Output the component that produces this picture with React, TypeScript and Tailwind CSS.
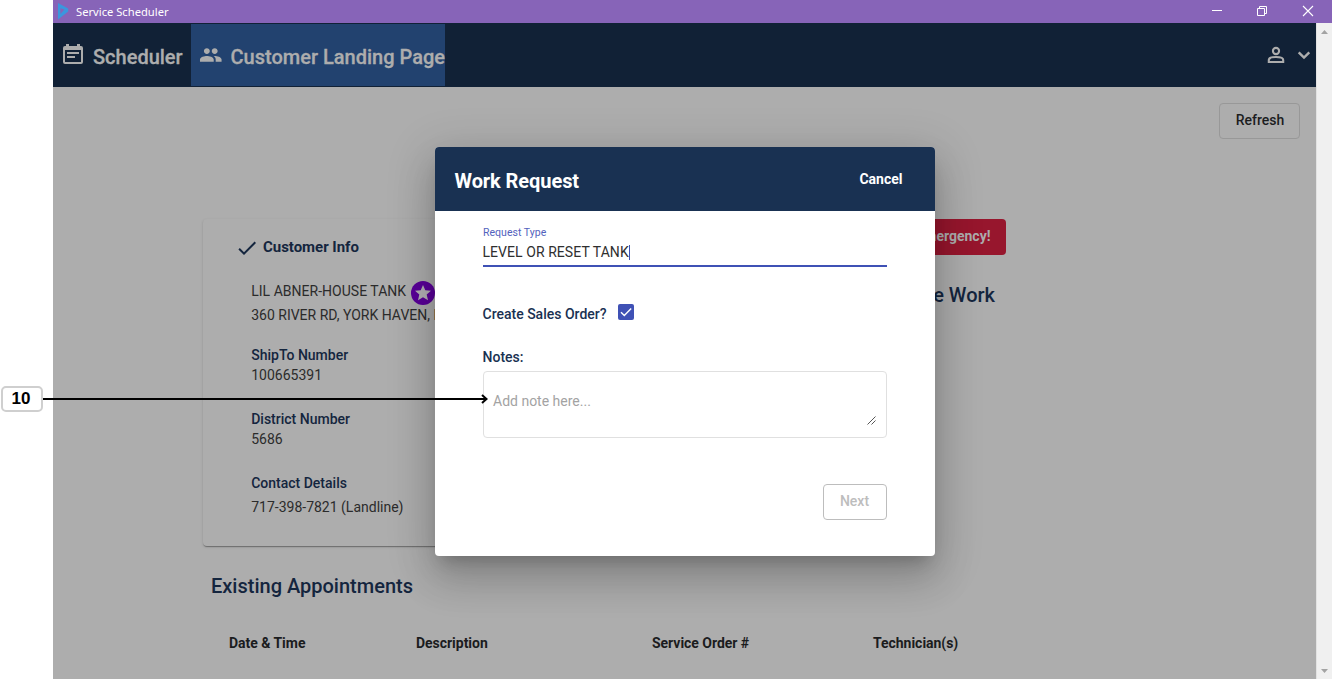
import React from "react";
import { MdCheck, MdPeople } from "react-icons/md";

function TitleBar() {
  return (
    <div className="flex h-[23px] shrink-0 items-center bg-[#8764b8] text-white">
      <svg className="ml-[4px] h-[17px] w-[12px]" viewBox="0 0 12 17">
        <path d="M1 0L11.2 5.6V8.6L1 16.4ZM3.4 5.2V11L7.4 6.6Z" fill="#3a97de" fillRule="evenodd" />
      </svg>
      <span className="ml-[7px] font-['Noto_Sans',sans-serif] text-[11.2px] leading-[22px]">Service Scheduler</span>
      <div className="ml-auto flex h-full items-center pr-[18px] pb-[2px]">
        <svg className="h-[12px] w-[103px]" viewBox="0 0 103 12" fill="none" stroke="#fff">
          <path d="M1 5.5H11M46.5 3.5H53.5V10.5H46.5ZM48.5 3.5V1.5H55.5V8.5H53.5" />
          <path d="M92 1L102 11M102 1L92 11" strokeWidth="1.1" />
        </svg>
      </div>
    </div>
  );
}

function NavBar() {
  return (
    <nav className="flex h-16 shrink-0 items-stretch bg-[#112136] py-px text-xl font-medium text-[#adadad]">
      <div className="flex w-[138px] items-center">
        <svg viewBox="0 0 20 20" className="mb-[3px] ml-[10px] size-5" fill="currentColor">
          <path d="M3 0h3v2h8V0h3v2h1a2 2 0 0 1 2 2v14a2 2 0 0 1-2 2H2a2 2 0 0 1-2-2V4a2 2 0 0 1 2-2h1ZM2 6v12h16V6Z" fillRule="evenodd" />
          <path d="M4 8h12v2H4ZM4 12h8v2H4Z" />
        </svg>
        <span className="ml-[10px] pt-[4px] leading-6 [-webkit-text-stroke:0.3px]">Scheduler</span>
      </div>
      <div className="flex w-[254px] items-center bg-[#22426f]">
        <MdPeople className="mb-px ml-[8px] size-6" />
        <span className="ml-[8px] whitespace-nowrap pt-[4px] leading-6 [-webkit-text-stroke:0.3px]">Customer Landing Page</span>
      </div>
      <div className="ml-auto flex items-center gap-1">
        <svg className="size-6" viewBox="0 0 24 24" fill="none" stroke="currentColor" strokeWidth="2.1">
          <circle cx="12" cy="8" r="3.1" />
          <path d="M4.8 19V17C4.8 14.9 9 14 12 14S19.2 14.9 19.2 17V19Z" />
        </svg>
        <svg className="size-6" viewBox="0 0 24 24" fill="none" stroke="currentColor" strokeWidth="2.4">
          <path d="M6.7 9.3L12 14.6L17.3 9.3" />
        </svg>
      </div>
    </nav>
  );
}

function Field({ label, value, className }: { label: string; value: string; className: string }) {
  return (
    <div className={className}>
      <div className="text-sm font-medium leading-5 text-[#14253e]">{label}</div>
      <div>{value}</div>
    </div>
  );
}

function CustomerCard() {
  return (
    <section className="h-[327px] w-[394px] rounded bg-[#adadad] text-sm text-[#2b2b2b] shadow-[0_2px_1px_-1px_rgba(0,0,0,0.2),0_1px_1px_rgba(0,0,0,0.14),0_1px_3px_rgba(0,0,0,0.12)]">
      <div className="flex h-[56px] items-center pl-[32px] text-[#14253e]">
        <MdCheck className="mt-[2px] size-6" />
        <h2 className="ml-[4px] text-[15px] font-bold leading-5 tracking-[-0.03px]">Customer Info</h2>
      </div>
      <div className="pl-[48.2px]">
        <div className="mt-[3px] flex h-[26px] items-center">
          <span className="tracking-[0.02px]">LIL ABNER-HOUSE TANK</span>
          <svg className="mt-[4px] ml-[5px] size-6 shrink-0" viewBox="0 0 24 24">
            <circle cx="12" cy="12" r="12" fill="#5a0099" />
            <path d="M12 4L14.3 9.3L20 9.8L15.7 13.6L17 19.2L12 16.2L7 19.2L8.3 13.6L4 9.8L9.7 9.3Z" fill="#b4b1b6" />
          </svg>
        </div>
        <div className="mt-px h-5 whitespace-nowrap leading-5">360 RIVER RD, YORK HAVEN, PA 17370</div>
        <Field label="ShipTo Number" value="100665391" className="mt-[20px] leading-5" />
        <Field label="District Number" value="5686" className="mt-[24px] leading-5" />
        <Field label="Contact Details" value="717-398-7821 (Landline)" className="mt-[24px] leading-7" />
      </div>
    </section>
  );
}

function CustomerPage() {
  return (
    <main className="flex min-h-0 flex-1 flex-col overflow-hidden bg-[#adadad]">
      <div className="flex justify-end pt-4 pr-4">
        <button className="h-9 w-[81px] rounded border border-[#989898] pb-[2px] pl-px text-sm font-medium text-[#1c1d1f]">Refresh</button>
      </div>
      <div className="mt-20 flex pl-[150px]">
        <CustomerCard />
        <div className="flex w-[409px] flex-col items-end">
          <button className="h-9 w-[130px] rounded bg-[#97162d] pr-[15.5px] pb-[2px] text-right text-sm font-bold text-[#adadad]">Emergency!</button>
          <h2 className="mt-[28px] mr-[11px] text-xl font-medium leading-6 text-[#14253e]">Schedule Work</h2>
        </div>
      </div>
      <h2 className="mt-[28px] ml-[158px] text-xl font-medium leading-6 text-[#14253e]">Existing Appointments</h2>
      <div className="mt-[35px] ml-[176px] grid grid-cols-[187px_236px_221px_1fr] text-sm font-bold leading-5 tracking-[-0.03px] text-[#1b1c1e]">
        <span>Date &amp; Time</span>
        <span>Description</span>
        <span>Service Order #</span>
        <span>Technician(s)</span>
      </div>
    </main>
  );
}

function Scrollbar() {
  return (
    <div className="flex w-4 flex-col items-center justify-between bg-[#f0f0f0] pt-[7px] pb-[6px] shadow-[inset_1px_0_0_#e2e2e2]">
      <svg className="h-1 w-[7px]" viewBox="0 0 7 4"><path d="M0 4L3.5 0L7 4Z" fill="#a3a3a3" /></svg>
      <svg className="h-1 w-[7px]" viewBox="0 0 7 4"><path d="M0 0L3.5 4L7 0Z" fill="#a3a3a3" /></svg>
    </div>
  );
}

function WorkRequestDialog() {
  return (
    <div
      role="dialog"
      className="absolute top-[147px] left-[435px] flex h-[409px] w-[500px] flex-col overflow-visible rounded bg-white text-sm shadow-[0_11px_15px_-7px_rgba(0,0,0,0.2),0_24px_38px_3px_rgba(0,0,0,0.14),0_9px_46px_8px_rgba(0,0,0,0.12)]"
    >
      <header className="flex h-16 items-center justify-between rounded-t bg-[#193152] pr-[32.5px] pl-[19.5px] text-white">
        <h1 className="pt-[4px] text-xl font-bold leading-6 tracking-[-0.07px]">Work Request</h1>
        <button className="text-sm font-bold leading-5">Cancel</button>
      </header>
      <div className="flex flex-1 flex-col px-12 text-[#193152]">
        <div className="mt-[15px] h-[13px] text-[10.5px] leading-[14px] tracking-[0.03px] text-[#5362bd]">Request Type</div>
        <div className="flex h-[28px] items-center border-b-2 border-[#3f51b5] text-[#2f2f2f]">
          <span className="-ml-[0.5px] tracking-[0.06px]">LEVEL OR RESET TANK</span>
          <span className="h-[15px] w-px bg-[#3f51b5]" />
        </div>
        <div className="mt-[34px] flex h-6 items-center font-medium">
          <span className="-ml-[0.5px] pt-px">Create Sales Order?</span>
          <span className="mb-[3px] ml-[11.5px] flex size-4 items-center justify-center rounded-[2px] bg-[#3f51b5]">
            <svg className="size-4" viewBox="0 0 16 16" fill="none" stroke="#fff" strokeWidth="1.4"><path d="M3 8.2L6.3 11.5L13.2 4.5" /></svg>
          </span>
        </div>
        <div className="-ml-[0.5px] mt-[22px] font-medium leading-5">Notes:</div>
        <div className="mt-[4px] flex h-[67px] shrink-0 justify-between rounded border border-[#e0e0e0] pr-[10px] pl-[9px] text-[#a3a3a3]">
          <span className="mt-[19px] leading-5">Add note here...</span>
          <svg className="mt-[44px] size-[9px]" viewBox="0 0 9 9" stroke="#444" strokeWidth="0.9"><path d="M.5 8.5L8.5 .5M4.5 8.5L8.5 4.5" /></svg>
        </div>
        <button className="mt-[46px] h-9 w-16 shrink-0 self-end rounded border border-[#bdbdbd] pr-[1px] pb-[2px] font-medium text-[#bdbdbd]">Next</button>
      </div>
    </div>
  );
}

function Callout() {
  return (
    <div className="absolute top-[386px] left-[1px] flex h-[26px] items-center">
      <span className="flex h-[26px] w-[42px] items-center justify-center rounded-[5px] border-2 border-[#cfcfcf] bg-white pr-[2px] font-['Liberation_Sans',sans-serif] text-[17px] font-bold text-black">10</span>
      <svg className="h-[10px] w-[445px]" viewBox="0 0 445 10" fill="none" stroke="#000" strokeWidth="2">
        <path d="M0 5H443M439 1L443.5 5L439 9" />
      </svg>
    </div>
  );
}

export default function App() {
  return (
    <div className="relative flex h-[679px] w-[1332px] overflow-hidden bg-white pl-[53px] font-['Roboto',sans-serif]">
      <div className="flex flex-1 flex-col">
        <TitleBar />
        <div className="flex min-h-0 flex-1">
          <div className="flex min-w-0 flex-1 flex-col">
            <NavBar />
            <CustomerPage />
          </div>
          <Scrollbar />
        </div>
      </div>
      <WorkRequestDialog />
      <Callout />
    </div>
  );
}
